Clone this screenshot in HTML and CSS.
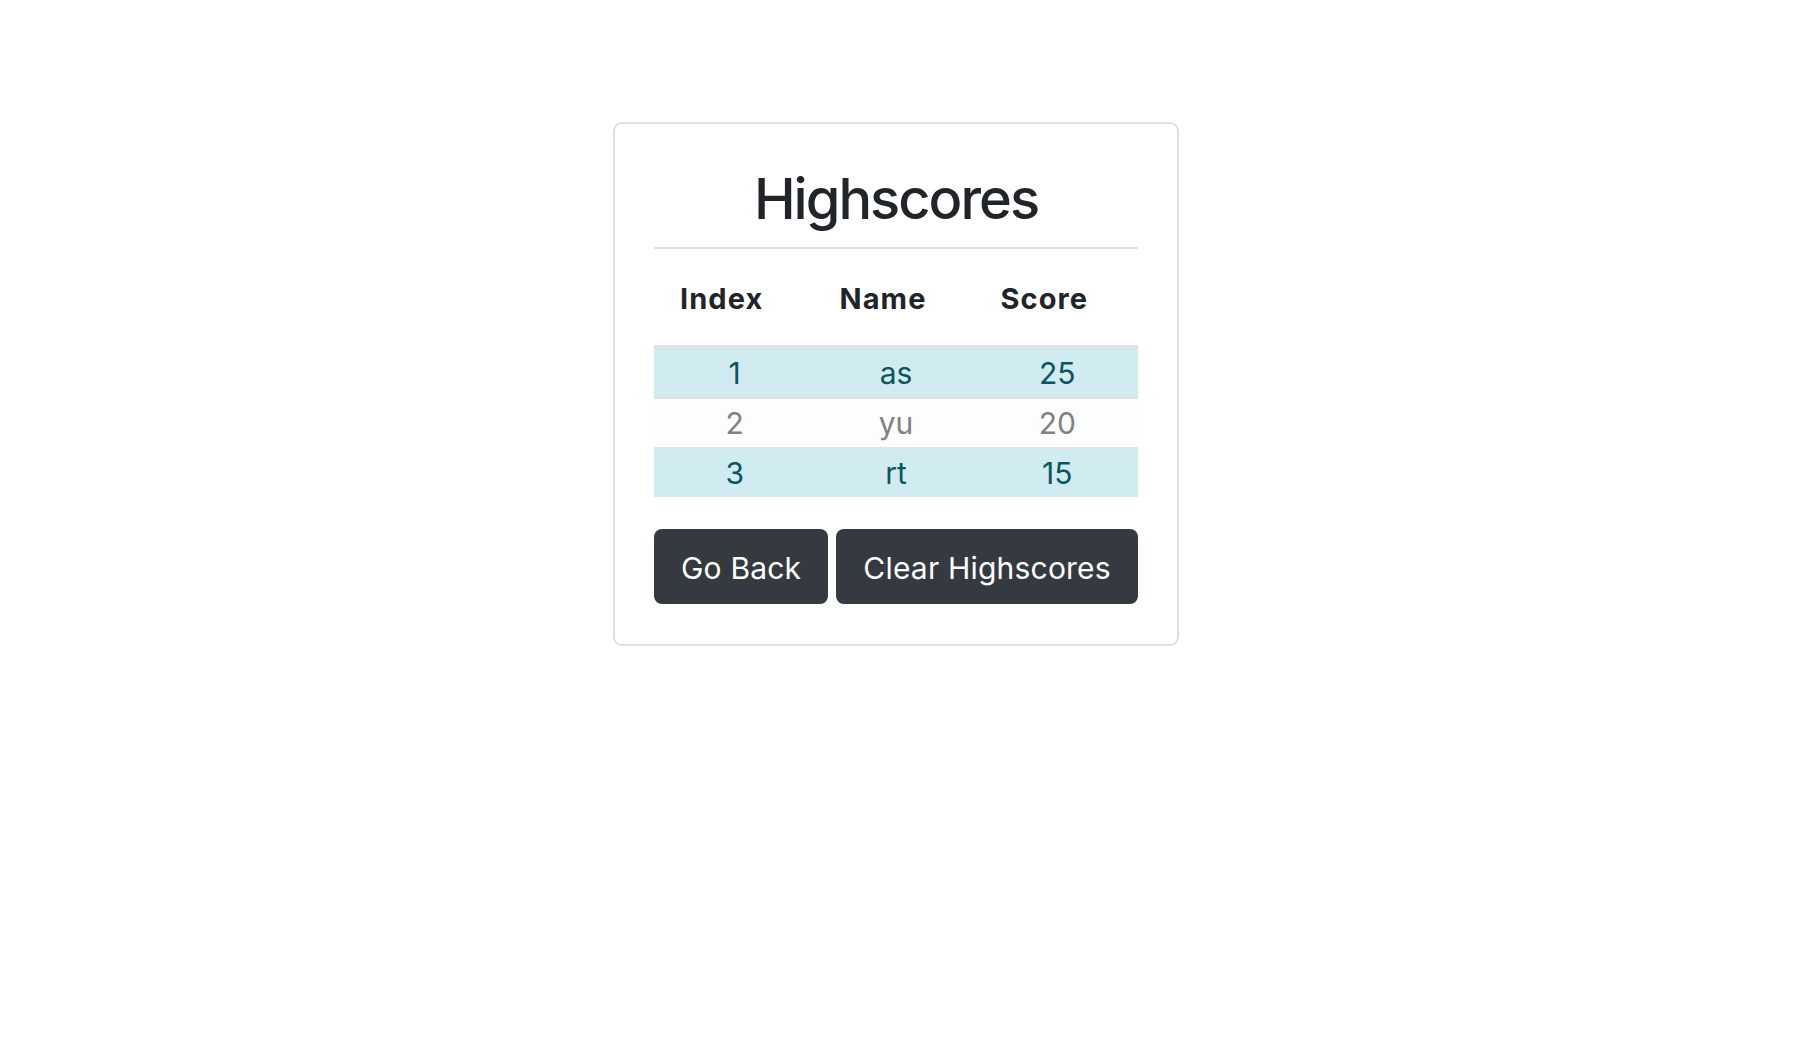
FILE: index.html
```html
<!DOCTYPE html>
<html lang="en">
<head>
<meta charset="utf-8">
<title>Highscores</title>
<link rel="stylesheet" href="styles.css">
</head>
<body>
<main class="page">
  <section class="card">
    <h1 class="title">Highscores</h1>
    <div class="rule"></div>
    <div class="scores">
      <div class="head-row">
        <div class="head-cell">Index</div>
        <div class="head-cell">Name</div>
        <div class="head-cell">Score</div>
      </div>
      <div class="row row-info">
        <div class="cell">1</div>
        <div class="cell">as</div>
        <div class="cell">25</div>
      </div>
      <div class="row row-light">
        <div class="cell">2</div>
        <div class="cell">yu</div>
        <div class="cell">20</div>
      </div>
      <div class="row row-info">
        <div class="cell">3</div>
        <div class="cell">rt</div>
        <div class="cell">15</div>
      </div>
    </div>
    <div class="actions">
      <button class="btn" type="button">Go Back</button>
      <button class="btn" type="button">Clear Highscores</button>
    </div>
  </section>
</main>
</body>
</html>
```
FILE: styles.css
```css
html, body {
  margin: 0;
  padding: 0;
  background: #ffffff;
}

body {
  font-family: Inter, "Noto Sans", "Liberation Sans", sans-serif;
  color: #212529;
}

.page {
  padding-top: 122px;
  padding-right: 4px;
}

.card {
  box-sizing: border-box;
  width: 566px;
  margin: 0 auto;
  border: 2px solid #e0e0e0;
  border-radius: 9px;
  padding: 41px 39px 40px;
  background: #ffffff;
}

.title {
  margin: 0;
  font-size: 56px;
  line-height: 68px;
  font-weight: 500;
  text-align: center;
  letter-spacing: -2px;
  color: #212529;
}

.rule {
  margin-top: 14px;
  height: 2px;
  background: #dee2e6;
}

.scores {
  display: flex;
  flex-direction: column;
}

.head-row {
  display: grid;
  grid-template-columns: 1fr 1fr 1fr;
  border-bottom: 4px solid #dee2e6;
}

.head-cell {
  padding: 32px 26px 29px 0;
  font-size: 29px;
  line-height: 35px;
  font-weight: 700;
  text-align: center;
  letter-spacing: 1.1px;
  color: #212529;
}

.row {
  display: grid;
  grid-template-columns: 1fr 1fr 1fr;
}

.row + .row {
  border-top: 2px solid #dee2e6;
}

.cell {
  padding: 6px 0;
  font-size: 30px;
  line-height: 36px;
  text-align: center;
}

.row-info {
  background: #d1ecf1;
  color: #0c5460;
}

.row-light {
  background: #fdfdfe;
  color: #818182;
}

.actions {
  display: flex;
  gap: 8px;
  margin-top: 32px;
}

.btn {
  flex: none;
  white-space: nowrap;
  font-family: inherit;
  font-size: 30px;
  line-height: 36px;
  padding: 21px 27px 18px;
  border: 0;
  border-radius: 8px;
  background: #343a40;
  color: #ffffff;
  letter-spacing: 0.2px;
  cursor: pointer;
}
```
